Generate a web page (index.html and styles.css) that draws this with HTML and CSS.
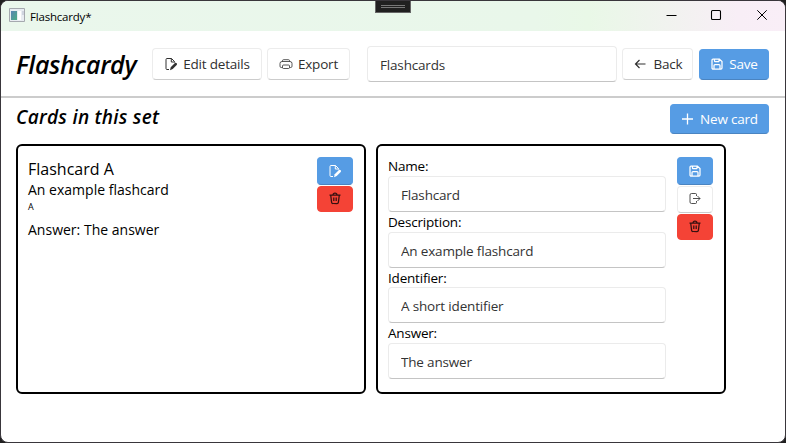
FILE: index.html
```html
<!DOCTYPE html>
<html lang="en">
<head>
<meta charset="utf-8">
<title>Flashcardy*</title>
<link rel="stylesheet" href="styles.css">
</head>
<body>
<svg class="symbols" aria-hidden="true">
  <symbol id="edit" viewBox="0 0 14 14"><path d="M5 12.500H3a1 1 0 0 1-1-1v-9a1 1 0 0 1 1-1h4.500l3 3v1M7.300 1.500V5H10.500" fill="none" stroke="currentColor"/><path d="M6 13.200l.7-3 4-4c1.200-1.200 3.200.6 2 1.900l-4 4z" fill="currentColor"/></symbol>
  <symbol id="print" viewBox="0 0 14 14"><path d="M3.500 10.500H2.300a1.300 1.300 0 0 1-1.300-1.300V6.500a2 2 0 0 1 2-2h8a2 2 0 0 1 2 2v2.700a1.300 1.300 0 0 1-1.300 1.300h-1.200M3.500 4.500V3.700a1 1 0 0 1 1-1h5a1 1 0 0 1 1 1v.8M4.500 8h5a1 1 0 0 1 1 1v1.500a1 1 0 0 1-1 1h-5a1 1 0 0 1-1-1V9a1 1 0 0 1 1-1z" fill="none" stroke="currentColor" stroke-opacity=".8"/></symbol>
  <symbol id="back" viewBox="0 0 14 14"><path d="M12.500 7H2.500M6.500 3L2.500 7l4 4" fill="none" stroke="currentColor" stroke-width="1.200"/></symbol>
  <symbol id="save" viewBox="0 0 14 14"><path d="M3 2h6.400L12 4.500V11a1.100 1.100 0 0 1-1.100 1.100H3.100A1.100 1.100 0 0 1 2 11V3A1 1 0 0 1 3 2zM4.500 2v2a.7.7 0 0 0 .7.700h3A.7.7 0 0 0 9 4V2M4 12V8.500a1 1 0 0 1 1-1h4a1 1 0 0 1 1 1V12" fill="none" stroke="currentColor" stroke-width="1.250"/></symbol>
  <symbol id="plus" viewBox="0 0 14 14"><path d="M6.500 1.500v11M1 7h11" fill="none" stroke="currentColor" stroke-width="1.300"/></symbol>
  <symbol id="trash" viewBox="0 0 14 14"><path d="M1.500 3h11M5 3a2 2 0 0 1 4 0M2.700 3l.9 7.300A1.400 1.400 0 0 0 5 11.500h4a1.400 1.400 0 0 0 1.400-1.200L11.300 3M5.800 5.500v3.500M8.200 5.500v3.500" fill="none" stroke="currentColor" stroke-width="1.250"/></symbol>
  <symbol id="leave" viewBox="0 0 14 14"><path d="M8.500 4V2.500a1 1 0 0 0-1-1h-4A1.500 1.500 0 0 0 2 3v7a1.500 1.500 0 0 0 1.500 1.500h4a1 1 0 0 0 1-1V9M5 6.500h7M9.500 4L12 6.500 9.500 9" fill="none" stroke="currentColor" stroke-opacity=".85"/></symbol>
</svg>
<div class="window">
  <div class="grip"></div>
  <div class="titlebar">
    <svg class="app-icon" viewBox="0 0 16 14"><defs><linearGradient id="pane" x2="1" y2="1"><stop stop-color="#5b83b5"/><stop offset="1" stop-color="#4cae83"/></linearGradient></defs><path d="M.5.500h15v13H.5z" fill="#e9edf2" stroke="#a5a9af"/><path d="M2 3h6v9H2z" fill="url(#pane)"/><path d="M9 3h3v9H9z" fill="#fff"/><path d="M13 3h2v4h-2z" fill="#cfd4df"/></svg>
    <span class="caption">Flashcardy*</span>
    <svg class="controls" viewBox="0 0 102 12"><path d="M.5 6.500h10M91.300 1.300l9.400 9.400M100.700 1.300l-9.400 9.400" fill="none" stroke="#000"/><rect x="45.500" y="1.500" width="9" height="9" rx="1" fill="none" stroke="#000" stroke-width="1.100"/></svg>
  </div>
  <header class="toolbar">
    <h1 class="brand">Flashcardy</h1>
    <button class="btn edit-details"><svg><use href="#edit"/></svg><span>Edit details</span></button>
    <button class="btn export"><svg><use href="#print"/></svg><span>Export</span></button>
    <input class="field set-name" value="Flashcards">
    <button class="btn back"><svg><use href="#back"/></svg><span>Back</span></button>
    <button class="btn primary save"><svg><use href="#save"/></svg><span>Save</span></button>
  </header>
  <div class="section-head">
    <h2 class="section-title">Cards in this set</h2>
    <button class="btn primary new-card"><svg><use href="#plus"/></svg><span>New card</span></button>
  </div>
  <main class="cards">
    <article class="card">
      <div class="details">
        <div class="name">Flashcard A</div>
        <div class="text description">An example flashcard</div>
        <div class="identifier">A</div>
        <div class="text answer">Answer: The answer</div>
      </div>
      <div class="actions">
        <button class="icon-btn primary"><svg><use href="#edit"/></svg></button>
        <button class="icon-btn danger"><svg><use href="#trash"/></svg></button>
      </div>
    </article>
    <article class="card">
      <form class="form">
        <label>Name:</label><input class="field" value="Flashcard">
        <label>Description:</label><input class="field" value="An example flashcard">
        <label>Identifier:</label><input class="field" value="A short identifier">
        <label>Answer:</label><input class="field" value="The answer">
      </form>
      <div class="actions">
        <button class="icon-btn primary"><svg><use href="#save"/></svg></button>
        <button class="icon-btn plain"><svg><use href="#leave"/></svg></button>
        <button class="icon-btn danger"><svg><use href="#trash"/></svg></button>
      </div>
    </article>
  </main>
</div>
</body>
</html>
```
FILE: styles.css
```css
* { box-sizing: border-box; }
body { margin: 0; background: #202020; overflow: hidden; font-family: "Open Sans", "Noto Sans", sans-serif; font-size: 13px; color: #000; }
button, input { font: inherit; margin: 0; }
.symbols { position: absolute; width: 0; height: 0; }
.window { position: relative; width: 786px; height: 443px; border: 1px solid #39363b; border-radius: 8px; overflow: hidden; background: #fff; }
.grip { position: absolute; left: 374px; top: -1px; width: 36px; height: 13px; border: 1px solid #666; background: linear-gradient(#777, #777) 5px 4px / 24px 1px no-repeat, linear-gradient(#777, #777) 5px 6px / 24px 1px no-repeat, #202020; }
.titlebar { height: 30px; display: flex; align-items: center; padding: 0 17px 0 8px; background: linear-gradient(90deg, #eaf7ec 0%, #e9f7ea 68%, #e9f8e7 75%, #f8eef6 94%, #f9eef7 100%); }
.app-icon { width: 16px; height: 14px; margin-right: 5px; margin-top: -2px; }
.caption { font-size: 11.5px; letter-spacing: -0.2px; }
.controls { width: 102px; height: 12px; margin-left: auto; margin-top: -2px; }
.toolbar { height: 67px; display: flex; align-items: center; padding: 0 16px 0 15px; border-bottom: 2px solid #ccc; }
h1, h2 { margin: 0; font-style: italic; font-weight: 600; white-space: nowrap; }
.brand { width: 136px; font-size: 25px; line-height: 34px; letter-spacing: -0.3px; }
.btn { height: 32px; display: flex; align-items: center; justify-content: center; padding: 1px 0 0; gap: 5px; border: 1px solid #ececec; border-bottom-color: #ccc; border-radius: 4px; background: #fff; color: #303030; font-size: 13.5px; letter-spacing: -0.2px; white-space: nowrap; }
.btn svg { width: 14px; height: 14px; margin-top: -1px; }
.edit-details { width: 110px; margin-right: 5px; }
.export { width: 83px; margin-right: 17px; }
.set-name { margin-right: 5px; }
.back { width: 71px; margin-right: 6px; gap: 7px; }
.primary { background: #569ce4; color: #fff; border-color: #569ce4; border-bottom-color: #4a84c1; }
.save { width: 70px; height: 31px; margin-top: 1px; padding-top: 0; }
.field { display: block; width: 278px; height: 36px; padding: 2px 12px 0; border: 1px solid #ebebeb; border-bottom-color: #c4c4c4; border-radius: 4px; background: #fff; color: #333; font-size: 13.5px; letter-spacing: -0.17px; outline: 0; }
.field.set-name { width: 250px; }
.section-head { display: flex; justify-content: space-between; height: 46px; padding: 6px 16px 0 15px; }
.section-title { font-size: 19px; line-height: 26px; letter-spacing: 0.26px; }
.new-card { width: 99px; height: 30px; gap: 5px; padding-top: 0; }
.cards { display: flex; gap: 10px; padding-left: 15px; }
.card { display: flex; justify-content: space-between; width: 350px; height: 250px; padding: 11px 11px 10px 10px; border: 2px solid #000; border-radius: 6px; }
.name { font-size: 16px; line-height: 22px; letter-spacing: 0; margin-top: 1px; }
.text { font-size: 14px; line-height: 20px; letter-spacing: 0.01px; }
.identifier { font-size: 9px; line-height: 14px; }
.answer { margin-top: 6px; }
.form { margin-top: -0.800px; }
.form label { display: block; height: 19.700px; line-height: 20.500px; font-size: 13.5px; letter-spacing: -0.2px; }
.actions { display: flex; flex-direction: column; gap: 1px; width: 36px; }
.icon-btn { width: 36px; height: 27.500px; padding: 0; display: flex; align-items: center; justify-content: center; border: 1px solid #ececec; border-bottom-color: #ccc; border-radius: 4px; background: #fff; color: #333; }
.icon-btn.primary { background: #569ce4; color: #fff; border-color: #569ce4; border-bottom-color: #4a84c1; }
.icon-btn.danger { background: #f44336; border-color: #f44336; color: #351010; height: 26px; }
.icon-btn svg { width: 14px; height: 14px; }
```
